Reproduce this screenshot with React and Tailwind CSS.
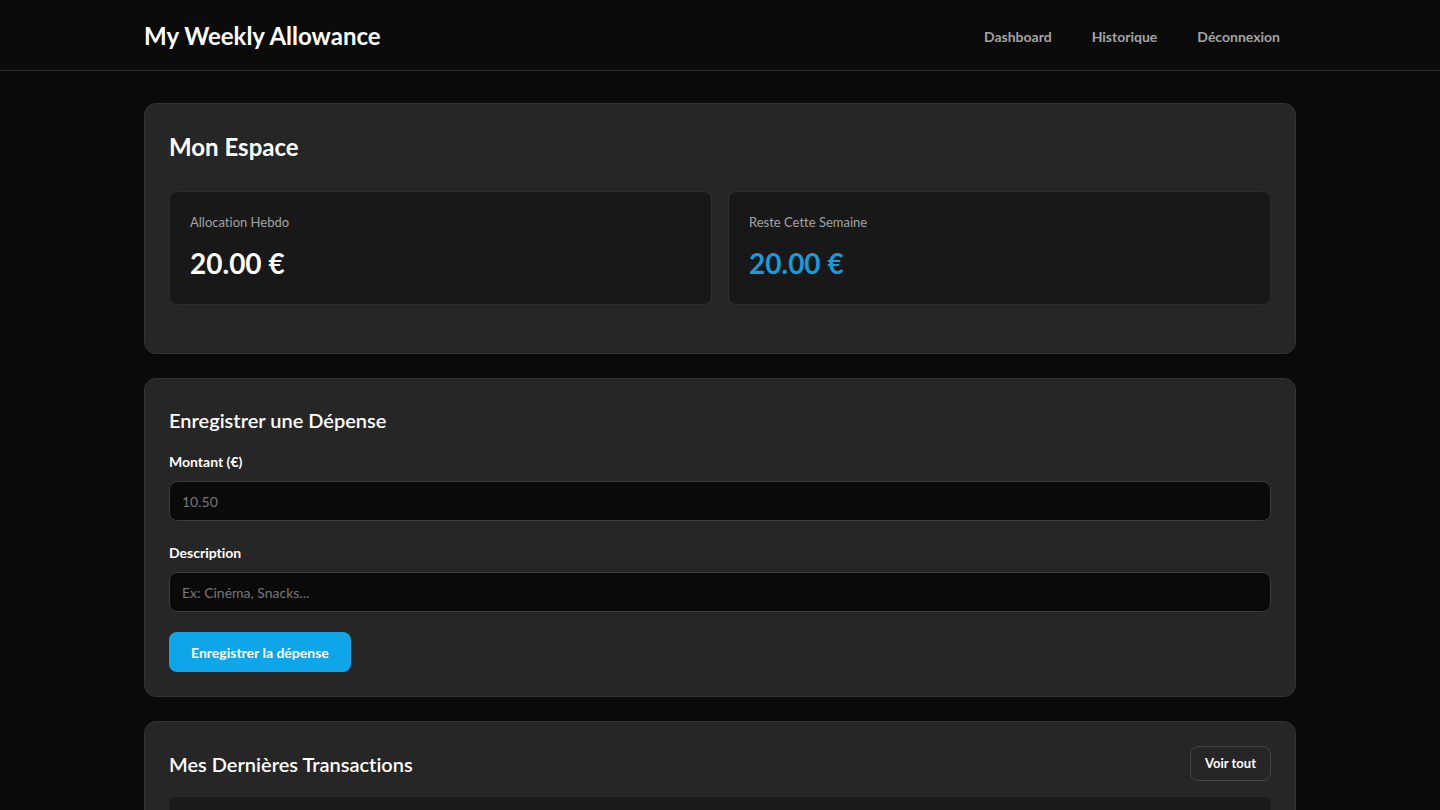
export default function App() {
  return (
    <div className="min-h-screen bg-[#0a0a0a] text-white [font-variant-ligatures:none]" style={{ fontFamily: 'Lato, "Open Sans", sans-serif' }}>
      <header className="border-b border-[#2a2a2a] bg-[#0b0b0b]">
        <div className="mx-auto flex h-[70px] max-w-6xl items-center justify-between pt-[2px]">
          <div className="text-[24px] font-bold">My Weekly Allowance</div>
          <nav className="flex items-center gap-2">
            <a className="px-4 py-2 text-[14px] font-bold text-[#a3a3a3]">Dashboard</a>
            <a className="px-4 py-2 text-[14px] font-bold text-[#a3a3a3]">Historique</a>
            <a className="px-4 py-2 text-[14px] font-bold text-[#a3a3a3]">Déconnexion</a>
          </nav>
        </div>
      </header>
      <main className="mx-auto flex max-w-6xl flex-col gap-6 pt-8">
        <section className="rounded-xl border border-[#333] bg-[#262626] px-6 pb-[48px] pt-6">
          <h1 className="text-[24px] font-bold leading-[38px]">Mon Espace</h1>
          <div className="mt-[25px] grid grid-cols-2 gap-4">
            <div className="h-[114px] rounded-lg border border-[#2f2f2f] bg-[#181818] px-5 pt-[21px]">
              <div className="text-[13px] text-[#a3a3a3]">Allocation Hebdo</div>
              <div className="mt-[12px] text-[28px] font-bold leading-[36px]">20.00 €</div>
            </div>
            <div className="h-[114px] rounded-lg border border-[#2f2f2f] bg-[#181818] px-5 pt-[21px]">
              <div className="text-[13px] text-[#a3a3a3]">Reste Cette Semaine</div>
              <div className="mt-[12px] text-[28px] font-bold leading-[36px] text-[#1a9ad6]">20.00 €</div>
            </div>
          </div>
        </section>
        <section className="rounded-xl border border-[#333] bg-[#262626] px-6 pb-6 pt-6">
          <h2 className="text-[20px] font-semibold leading-[34px]">Enregistrer une Dépense</h2>
          <label className="mt-[15px] block text-[14px] font-bold leading-[20px]">Montant (€)</label>
          <input className="mt-[9px] block h-[40px] w-full rounded-lg border border-[#3a3a3a] bg-[#0a0a0a] px-3 text-[14px] text-white placeholder-[#777]" placeholder="10.50" />
          <label className="mt-[22px] block text-[14px] font-bold leading-[20px]">Description</label>
          <input className="mt-[9px] block h-[40px] w-full rounded-lg border border-[#3a3a3a] bg-[#0a0a0a] px-3 text-[14px] text-white placeholder-[#777]" placeholder="Ex: Cinéma, Snacks..." />
          <button className="mt-[20px] h-[40px] rounded-lg bg-[#0ea5e9] px-[22px] text-[14px] font-bold text-white">Enregistrer la dépense</button>
        </section>
        <section className="rounded-xl border border-[#333] bg-[#262626] px-6 pb-6 pt-6">
          <div className="flex items-center justify-between">
            <h2 className="text-[20px] font-semibold leading-[30px]">Mes Dernières Transactions</h2>
            <button className="h-[35px] rounded-lg border border-[#444] px-[14px] text-[13px] font-bold text-white">Voir tout</button>
          </div>
          <div className="mt-4 h-[120px] rounded-t-md bg-[#1a1a1a]"></div>
        </section>
      </main>
    </div>
  );
}
